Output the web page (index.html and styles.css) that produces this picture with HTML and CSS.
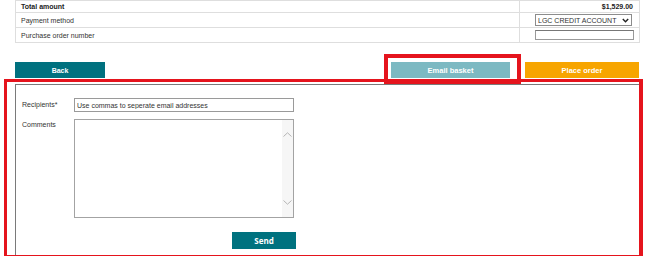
FILE: index.html
```html
<!DOCTYPE html>
<html lang="en">
  <head>
    <meta charset="utf-8">
    <link rel="stylesheet" href="styles.css">
  </head>
  <body>
    <div class="page">
      <table class="summary">
        <tr class="total-row">
          <th>Total amount</th>
          <td class="amount">$1,529.00</td>
        </tr>
        <tr>
          <td>Payment method</td>
          <td class="field-cell">
            <span class="select-wrap">
              <select class="payment-select">
                <option>LGC CREDIT ACCOUNT</option>
              </select>
              <svg class="select-arrow" width="7" height="5" viewBox="0 0 7 5"><path d="M0.8 1 L3.5 3.8 L6.2 1" fill="none" stroke="#222" stroke-width="1.4"/></svg>
            </span>
          </td>
        </tr>
        <tr>
          <td>Purchase order number</td>
          <td class="field-cell"><input class="po-input" type="text"></td>
        </tr>
      </table>

      <div class="actions">
        <button class="btn btn-back">Back</button>
        <button class="btn btn-email">Email basket</button>
        <button class="btn btn-order">Place order</button>
      </div>

      <div class="email-panel">
        <div class="form-row">
          <label class="form-label">Recipients*</label>
          <input class="recipients-input" type="text" value="Use commas to seperate email addresses">
        </div>
        <div class="form-row comments-row">
          <label class="form-label">Comments</label>
          <div class="comments-box">
            <textarea class="comments-text"></textarea>
            <div class="fake-scroll">
              <svg width="9" height="5" viewBox="0 0 9 5"><path d="M0.5 4.5 L4.5 0.8 L8.5 4.5" fill="none" stroke="#b5b5b5" stroke-width="1"/></svg>
              <svg width="9" height="5" viewBox="0 0 9 5"><path d="M0.5 0.5 L4.5 4.2 L8.5 0.5" fill="none" stroke="#b5b5b5" stroke-width="1"/></svg>
            </div>
          </div>
        </div>
        <div class="send-row">
          <button class="btn btn-send">Send</button>
        </div>
      </div>
    </div>

    <!-- review markers drawn over the page -->
    <div class="marker marker-email"></div>
    <div class="marker marker-panel"></div>
  </body>
</html>
```

FILE: styles.css
```css
body {
  margin: 0;
  background-color: #fff;
  color: #333;
  font-family: "Liberation Sans", Arial, sans-serif;
  font-size: 7px;
  overflow: hidden;
  height: 256px;
}

.page {
  padding: 0 10px 0 15px;
}

.summary {
  width: 625px;
  border-collapse: collapse;
  border: 1px solid #dedede;
  font-size: 7px;
}

.summary th,
.summary td {
  border-bottom: 1px solid #dedede;
  height: 14px;
  padding: 0 5px;
  text-align: left;
  font-weight: normal;
  vertical-align: middle;
}

.summary td:last-child {
  width: 99px;
  border-left: 1px solid #dedede;
}

.summary .total-row th,
.summary .total-row td {
  height: 11px;
  font-weight: bold;
  color: #222;
}

.summary .amount {
  text-align: right;
  padding-right: 6px;
}

.summary .field-cell {
  padding: 0 5px 0 15px;
}

.select-wrap {
  position: relative;
  display: block;
  width: 97px;
}

.payment-select {
  -webkit-appearance: none;
  appearance: none;
  display: block;
  width: 97px;
  height: 12px;
  margin: 0;
  padding: 0 0 0 2px;
  border: 1px solid #8c8c8c;
  border-radius: 0;
  background: #fff;
  font-family: "Liberation Sans", Arial, sans-serif;
  font-size: 7px;
  color: #333;
}

.select-arrow {
  position: absolute;
  right: 3px;
  top: 4px;
}

.po-input {
  display: block;
  width: 99px;
  height: 10px;
  margin: 0;
  padding: 0;
  box-sizing: border-box;
  border: 1px solid #999;
  border-top-color: #777;
}

.actions {
  display: flex;
  margin-top: 19px;
  gap: 15px;
}

.btn {
  height: 16px;
  border: none;
  border-radius: 0;
  color: #fff;
  font-family: "Liberation Sans", Arial, sans-serif;
  font-weight: bold;
  font-size: 7.5px;
  padding: 0;
  cursor: pointer;
}

.btn-back {
  width: 90px;
  background-color: #00717f;
  font-size: 7px;
}

.btn-email {
  width: 119px;
  margin-left: auto;
  background-color: #7cb9c2;
}

.btn-order {
  width: 114px;
  margin-right: 1px;
  background-color: #f7a500;
}

.email-panel {
  margin-top: 6px;
  border: 1px solid #7a7a7a;
  padding: 13px 6px 30px 6px;
}

.form-row {
  display: flex;
  align-items: flex-start;
}

.form-label {
  width: 52px;
  line-height: 14px;
  color: #333;
}

.comments-row {
  margin-top: 7px;
}

.comments-row .form-label {
  margin-top: -1px;
}

.recipients-input {
  width: 220px;
  height: 14px;
  margin: 0;
  padding: 0 2px;
  box-sizing: border-box;
  border: 1px solid #9a9a9a;
  font-family: "Liberation Sans", Arial, sans-serif;
  font-size: 7px;
  color: #333;
}

.comments-box {
  display: flex;
  width: 220px;
  height: 99px;
  box-sizing: border-box;
  border: 1px solid #a3a3a3;
}

.comments-text {
  flex: 1;
  border: none;
  resize: none;
  outline: none;
  margin: 0;
  padding: 2px;
}

.fake-scroll {
  width: 11px;
  box-sizing: border-box;
  background-color: #f6f6f6;
  display: flex;
  flex-direction: column;
  justify-content: space-between;
  align-items: center;
  padding: 12px 0 12px 0;
}

.send-row {
  display: flex;
  justify-content: flex-end;
  width: 274px;
  margin-top: 14px;
}

.btn-send {
  width: 64px;
  height: 17px;
  background-color: #00727f;
  font-family: "Open Sans", sans-serif;
  font-size: 8px;
}

.marker {
  position: absolute;
  border-style: solid;
  border-color: #e5141d;
  box-sizing: border-box;
}

.marker-email {
  left: 384px;
  top: 54px;
  width: 137px;
  height: 30px;
  border-width: 4px;
}

.marker-panel {
  left: 4px;
  top: 79px;
  width: 639px;
  height: 178px;
  border-width: 3px 4px 2px 3px;
}
```
